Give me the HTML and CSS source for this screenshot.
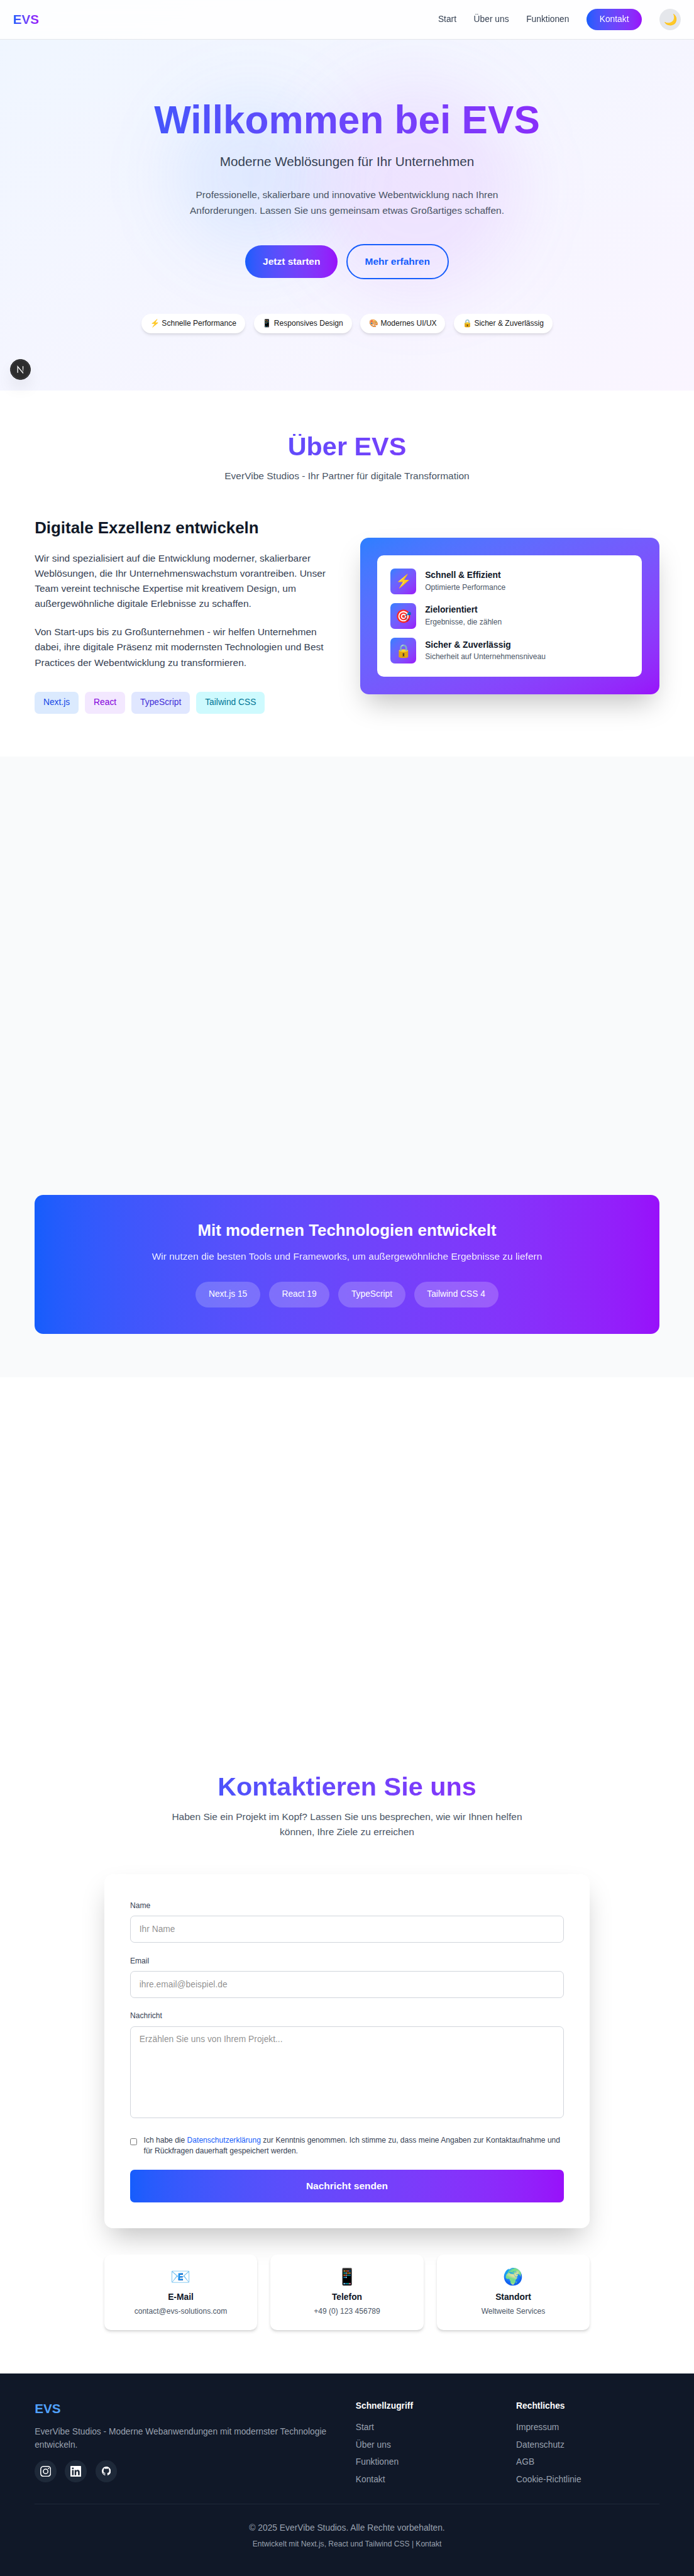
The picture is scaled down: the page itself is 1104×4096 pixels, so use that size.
FILE: index.html
```html
<!DOCTYPE html>
<html lang="de">
<head>
<meta charset="utf-8">
<title>EVS</title>
<link rel="stylesheet" href="styles.css">
</head>
<body>
<header class="header">
  <a class="logo gradient-text">EVS</a>
  <nav class="nav">
    <a>Start</a>
    <a>Über uns</a>
    <a>Funktionen</a>
    <a class="nav-cta">Kontakt</a>
    <button class="theme-toggle">🌙</button>
  </nav>
</header>
<main>
<section class="hero">
  <div class="blob blob-blue"></div>
  <div class="blob blob-purple"></div>
  <div class="hero-content">
    <h1 class="hero-title gradient-text">Willkommen bei EVS</h1>
    <p class="hero-subtitle">Moderne Weblösungen für Ihr Unternehmen</p>
    <p class="hero-text">Professionelle, skalierbare und innovative Webentwicklung nach Ihren Anforderungen. Lassen Sie uns gemeinsam etwas Großartiges schaffen.</p>
    <div class="hero-actions">
      <a class="btn btn-primary">Jetzt starten</a>
      <a class="btn btn-outline">Mehr erfahren</a>
    </div>
    <div class="badges">
      <span class="badge">⚡ Schnelle Performance</span>
      <span class="badge">📱 Responsives Design</span>
      <span class="badge">🎨 Modernes UI/UX</span>
      <span class="badge">🔒 Sicher &amp; Zuverlässig</span>
    </div>
  </div>
</section>

<section class="about">
  <h2 class="section-title gradient-text">Über EVS</h2>
  <p class="section-lead">EverVibe Studios - Ihr Partner für digitale Transformation</p>
  <div class="about-grid">
    <div>
      <h3 class="about-title">Digitale Exzellenz entwickeln</h3>
      <p class="about-text">Wir sind spezialisiert auf die Entwicklung moderner, skalierbarer Weblösungen, die Ihr Unternehmenswachstum vorantreiben. Unser Team vereint technische Expertise mit kreativem Design, um außergewöhnliche digitale Erlebnisse zu schaffen.</p>
      <p class="about-text">Von Start-ups bis zu Großunternehmen - wir helfen Unternehmen dabei, ihre digitale Präsenz mit modernsten Technologien und Best Practices der Webentwicklung zu transformieren.</p>
      <div class="tags">
        <span class="tag tag-blue">Next.js</span>
        <span class="tag tag-purple">React</span>
        <span class="tag tag-indigo">TypeScript</span>
        <span class="tag tag-cyan">Tailwind CSS</span>
      </div>
    </div>
    <div class="values">
      <ul class="values-list">
        <li class="value"><span class="value-icon">⚡</span><div><h4>Schnell &amp; Effizient</h4><p>Optimierte Performance</p></div></li>
        <li class="value"><span class="value-icon">🎯</span><div><h4>Zielorientiert</h4><p>Ergebnisse, die zählen</p></div></li>
        <li class="value"><span class="value-icon">🔒</span><div><h4>Sicher &amp; Zuverlässig</h4><p>Sicherheit auf Unternehmensniveau</p></div></li>
      </ul>
    </div>
  </div>
</section>

<section class="features">
  <div class="tech">
    <h3>Mit modernen Technologien entwickelt</h3>
    <p>Wir nutzen die besten Tools und Frameworks, um außergewöhnliche Ergebnisse zu liefern</p>
    <div class="tech-pills">
      <span>Next.js 15</span>
      <span>React 19</span>
      <span>TypeScript</span>
      <span>Tailwind CSS 4</span>
    </div>
  </div>
</section>

<section class="contact">
  <div class="contact-inner">
    <h2 class="section-title gradient-text">Kontaktieren Sie uns</h2>
    <p class="section-lead contact-lead">Haben Sie ein Projekt im Kopf? Lassen Sie uns besprechen, wie wir Ihnen helfen können, Ihre Ziele zu erreichen</p>
    <form class="form">
      <div class="field">
        <label for="name">Name</label>
        <input id="name" type="text" placeholder="Ihr Name">
      </div>
      <div class="field">
        <label for="email">Email</label>
        <input id="email" type="email" placeholder="ihre.email@beispiel.de">
      </div>
      <div class="field field-message">
        <label for="message">Nachricht</label>
        <textarea id="message" placeholder="Erzählen Sie uns von Ihrem Projekt..."></textarea>
      </div>
      <div class="consent">
        <input id="consent" type="checkbox">
        <label for="consent">Ich habe die <a>Datenschutzerklärung</a> zur Kenntnis genommen. Ich stimme zu, dass meine Angaben zur Kontaktaufnahme und für Rückfragen dauerhaft gespeichert werden.</label>
      </div>
      <button class="submit" type="button">Nachricht senden</button>
    </form>
    <div class="infos">
      <div class="info"><div class="info-icon">📧</div><h3>E-Mail</h3><p>contact@evs-solutions.com</p></div>
      <div class="info"><div class="info-icon">📱</div><h3>Telefon</h3><p>+49 (0) 123 456789</p></div>
      <div class="info"><div class="info-icon">🌍</div><h3>Standort</h3><p>Weltweite Services</p></div>
    </div>
  </div>
</section>
</main>

<footer class="footer">
  <div class="footer-grid">
    <div class="footer-brand">
      <h3>EVS</h3>
      <p>EverVibe Studios - Moderne Webanwendungen mit modernster Technologie entwickeln.</p>
      <div class="socials">
        <a><svg viewBox="0 0 24 24"><path d="M12 2.163c3.204 0 3.584.012 4.85.07 3.252.148 4.771 1.691 4.919 4.919.058 1.265.069 1.645.069 4.849 0 3.205-.012 3.584-.069 4.849-.149 3.225-1.664 4.771-4.919 4.919-1.266.058-1.644.07-4.85.07-3.204 0-3.584-.012-4.849-.07-3.26-.149-4.771-1.699-4.919-4.92-.058-1.265-.07-1.644-.07-4.849 0-3.204.013-3.583.07-4.849.149-3.227 1.664-4.771 4.919-4.919 1.266-.057 1.645-.069 4.849-.069zM12 0C8.741 0 8.333.014 7.053.072 2.695.272.273 2.69.073 7.052.014 8.333 0 8.741 0 12c0 3.259.014 3.668.072 4.948.2 4.358 2.618 6.78 6.98 6.98C8.333 23.986 8.741 24 12 24c3.259 0 3.668-.014 4.948-.072 4.354-.2 6.782-2.618 6.979-6.98.059-1.28.073-1.689.073-4.948 0-3.259-.014-3.667-.072-4.947-.196-4.354-2.617-6.78-6.979-6.98C15.668.014 15.259 0 12 0zm0 5.838a6.162 6.162 0 100 12.324 6.162 6.162 0 000-12.324zM12 16a4 4 0 110-8 4 4 0 010 8zm6.406-11.845a1.44 1.44 0 100 2.881 1.44 1.44 0 000-2.881z"/></svg></a>
        <a><svg viewBox="0 0 24 24"><path d="M20.447 20.452h-3.554v-5.569c0-1.328-.027-3.037-1.852-3.037-1.853 0-2.136 1.445-2.136 2.939v5.667H9.351V9h3.414v1.561h.046c.477-.9 1.637-1.85 3.37-1.85 3.601 0 4.267 2.37 4.267 5.455v6.286zM5.337 7.433a2.062 2.062 0 01-2.063-2.065 2.064 2.064 0 112.063 2.065zm1.782 13.019H3.555V9h3.564v11.452zM22.225 0H1.771C.792 0 0 .774 0 1.729v20.542C0 23.227.792 24 1.771 24h20.451C23.2 24 24 23.227 24 22.271V1.729C24 .774 23.2 0 22.222 0h.003z"/></svg></a>
        <a><svg viewBox="0 0 16 16" class="github"><path d="M8 0C3.58 0 0 3.58 0 8c0 3.54 2.29 6.53 5.47 7.59.4.07.55-.17.55-.38 0-.19-.01-.82-.01-1.49-2.01.37-2.53-.49-2.69-.94-.09-.23-.48-.94-.82-1.13-.28-.15-.68-.52-.01-.53.63-.01 1.08.58 1.23.82.72 1.21 1.87.87 2.33.66.07-.52.28-.87.51-1.07-1.78-.2-3.64-.89-3.64-3.95 0-.87.31-1.59.82-2.15-.08-.2-.36-1.02.08-2.12 0 0 .67-.21 2.2.82.64-.18 1.32-.27 2-.27s1.36.09 2 .27c1.53-1.04 2.2-.82 2.2-.82.44 1.1.16 1.92.08 2.12.51.56.82 1.27.82 2.15 0 3.07-1.87 3.75-3.65 3.95.29.25.54.73.54 1.48 0 1.07-.01 1.93-.01 2.2 0 .21.15.46.55.38A8.01 8.01 0 0016 8c0-4.42-3.58-8-8-8z"/></svg></a>
      </div>
    </div>
    <div class="footer-col">
      <h4>Schnellzugriff</h4>
      <ul><li>Start</li><li>Über uns</li><li>Funktionen</li><li>Kontakt</li></ul>
    </div>
    <div class="footer-col">
      <h4>Rechtliches</h4>
      <ul><li>Impressum</li><li>Datenschutz</li><li>AGB</li><li>Cookie-Richtlinie</li></ul>
    </div>
  </div>
  <div class="footer-bottom">
    <p>© 2025 EverVibe Studios. Alle Rechte vorbehalten.</p>
    <p class="small">Entwickelt mit Next.js, React und Tailwind CSS | Kontakt</p>
  </div>
</footer>

<div class="dev-badge">
  <svg viewBox="0 0 40 40" fill="none">
    <defs>
      <linearGradient id="stem" x1="0" y1="13" x2="0" y2="27" gradientUnits="userSpaceOnUse"><stop offset=".3" stop-color="#fff"/><stop offset="1" stop-color="#fff" stop-opacity=".1"/></linearGradient>
    </defs>
    <path d="M14.5 27V14L26 28" stroke="#fff" stroke-width="1.7"/>
    <path d="M25.4 13.3v11.5" stroke="url(#stem)" stroke-width="1.7"/>
  </svg>
</div>
</body>
</html>
```
FILE: styles.css
```css
html { font-size: 13.8px; }
*, *::before, *::after { box-sizing: border-box; margin: 0; padding: 0; }
body {
  position: relative;
  font-family: "Liberation Sans", Arial, sans-serif;
  line-height: 1.5;
  color: #171717;
  background: #fff;
}
ul { list-style: none; }
button, input, textarea { font: inherit; color: inherit; border: 0; background: none; }

.gradient-text {
  background: linear-gradient(to right in oklab, #155dfc, #9810fa);
  -webkit-background-clip: text;
  background-clip: text;
  color: transparent;
}

/* Header */
.header {
  position: absolute;
  top: 0; left: 0; right: 0;
  z-index: 10;
  display: flex;
  justify-content: space-between;
  align-items: center;
  padding: 1rem 1.5rem;
  background: rgba(255, 255, 255, .87);
  backdrop-filter: blur(12px);
  border-bottom: 1px solid #e5e7eb;
}
.logo { font-size: 1.5rem; line-height: 2rem; font-weight: 700; }
.nav { display: flex; align-items: center; gap: 2rem; color: #364153; }
.nav-cta {
  padding: .5rem 1.5rem;
  border-radius: 99px;
  color: #fff;
  background: linear-gradient(to right in oklab, #155dfc, #9810fa);
}
.theme-toggle {
  display: flex;
  align-items: center;
  justify-content: center;
  width: 2.5rem;
  height: 2.5rem;
  border-radius: 50%;
  background: #e5e7eb;
  font-size: 1.25rem;
  line-height: 1.75rem;
}

/* Hero */
.hero {
  position: relative;
  height: 620.7px;
  padding-top: 11.625rem;
  overflow: hidden;
  text-align: center;
  background: linear-gradient(to bottom right in oklab, #eff6ff, #faf5ff);
}
.blob { position: absolute; border-radius: 50%; filter: blur(4rem); }
.blob-blue {
  top: 25%; left: 25%;
  width: 18rem; height: 18rem;
  background: rgba(43, 127, 255, .1);
}
.blob-purple {
  right: 25%; bottom: 25%;
  width: 24rem; height: 24rem;
  background: rgba(173, 70, 255, .1);
}
.hero-content { position: relative; padding: 0 4rem; }
.hero-title { font-size: 4.5rem; line-height: 1; font-weight: 700; margin-bottom: 1.5rem; }
.hero-subtitle { font-size: 1.5rem; line-height: 2rem; color: #364153; margin-bottom: 2rem; }
.hero-text {
  width: 42rem;
  margin: 0 auto 3rem;
  padding: 0 2rem;
  font-size: 1.125rem;
  line-height: 1.75rem;
  color: #4a5565;
}
.hero-actions { display: flex; justify-content: center; align-items: center; gap: 1rem; margin-bottom: 4rem; }
.btn { padding: 1rem 2rem; border-radius: 99px; font-size: 1.125rem; line-height: 1.75rem; font-weight: 600; }
.btn-primary { color: #fff; background: linear-gradient(to right in oklab, #155dfc, #9810fa); }
.btn-outline { color: #155dfc; border: 2px solid #155dfc; }
.badges { display: flex; justify-content: center; gap: 1rem; }
.badge {
  padding: .5rem 1rem;
  border-radius: 99px;
  background: #fff;
  font-size: .875rem;
  line-height: 1.25rem;
  box-shadow: 0 .25rem .375rem -.0625rem rgba(0, 0, 0, .1), 0 .125rem .25rem -.125rem rgba(0, 0, 0, .1);
}

/* About */
.about { height: 582.8px; padding: 5rem 4rem; }
.section-title { font-size: 3rem; line-height: 1; font-weight: 700; text-align: center; margin-bottom: 1rem; }
.section-lead {
  margin-bottom: 4rem;
  font-size: 1.125rem;
  line-height: 1.75rem;
  text-align: center;
  color: #4a5565;
}
.about-grid { display: grid; grid-template-columns: 1fr 1fr; gap: 3rem; align-items: center; }
.about-title { font-size: 1.875rem; line-height: 2.25rem; font-weight: 700; color: #101828; margin-bottom: 1.5rem; }
.about-text { font-size: 1.125rem; line-height: 1.75rem; color: #364153; margin-bottom: 1.5rem; }
.tags { display: flex; gap: .75rem; padding-top: 1rem; }
.tag { padding: .5rem 1rem; border-radius: .5rem; }
.tag-blue { background: #dbeafe; color: #1447e6; }
.tag-purple { background: #f3e8ff; color: #8200db; }
.tag-indigo { background: #e0e7ff; color: #432dd7; }
.tag-cyan { background: #cefafe; color: #007595; }
.values {
  padding: 2rem;
  border-radius: 1rem;
  background: linear-gradient(to bottom right in oklab, #2b7fff, #9810fa);
  box-shadow: 0 1.5625rem 3.125rem -.75rem rgba(0, 0, 0, .25);
}
.values-list { display: grid; gap: 1rem; padding: 1.5rem; border-radius: .75rem; background: #fff; }
.value { display: flex; align-items: center; gap: 1rem; }
.value-icon {
  display: flex;
  align-items: center;
  justify-content: center;
  width: 3rem;
  height: 3rem;
  border-radius: .5rem;
  background: linear-gradient(to bottom right in oklab, #2b7fff, #9810fa);
  font-size: 1.5rem;
  line-height: 2rem;
}
.value h4 { font-size: 1rem; font-weight: 600; color: #101828; }
.value p { font-size: .875rem; line-height: 1.25rem; color: #4a5565; }

/* Features */
.features {
  display: flex;
  flex-direction: column;
  justify-content: flex-end;
  height: 986.3px;
  padding: 5rem 4rem;
  background: #f9fafb;
}
.tech {
  padding: 3rem;
  border-radius: 1rem;
  text-align: center;
  color: #fff;
  background: linear-gradient(to right in oklab, #155dfc, #9810fa);
}
.tech h3 { font-size: 1.875rem; line-height: 2.25rem; margin-bottom: 1rem; }
.tech p { font-size: 1.125rem; line-height: 1.75rem; margin-bottom: 2rem; opacity: .9; }
.tech-pills { display: flex; justify-content: center; gap: 1rem; }
.tech-pills span { padding: .75rem 1.5rem; border-radius: 99px; background: rgba(255, 255, 255, .2); }

/* Contact */
.contact {
  display: flex;
  flex-direction: column;
  justify-content: flex-end;
  height: 1584.6px;
  padding-bottom: 5rem;
}
.contact-inner { width: 56rem; margin: 0 auto; }
.contact-lead { width: 42rem; margin-left: auto; margin-right: auto; }
.form {
  padding: 3rem;
  border-radius: 1rem;
  background: #fff;
  box-shadow: 0 1.5625rem 3.125rem -.75rem rgba(0, 0, 0, .25);
}
.field { margin-bottom: 1.5rem; }
.field label { display: block; margin-bottom: .5rem; font-size: .875rem; line-height: 1.25rem; color: #364153; }
.field input, .field textarea {
  display: block;
  width: 100%;
  height: 3.125rem;
  padding: .75rem 1rem;
  border: 1px solid #d1d5dc;
  border-radius: .5rem;
  line-height: 1.5rem;
  resize: none;
}
.field textarea { height: 10.625rem; }
.field ::placeholder { color: rgba(23, 23, 23, .5); }
.field-message { margin-bottom: 1.9375rem; }
.consent { display: flex; align-items: flex-start; gap: .75rem; margin-bottom: 1.5rem; }
.consent input { flex: none; width: .8125rem; height: .8125rem; margin-top: .35rem; }
.consent label { font-size: .875rem; line-height: 1.25rem; color: #364153; }
.consent a { color: #155dfc; }
.submit {
  display: block;
  width: 100%;
  padding: 1rem;
  border-radius: .5rem;
  font-size: 1.125rem;
  line-height: 1.75rem;
  font-weight: 600;
  color: #fff;
  background: linear-gradient(to right in oklab, #155dfc, #9810fa);
}
.infos { display: grid; grid-template-columns: repeat(3, 1fr); gap: 1.5rem; margin-top: 3rem; text-align: center; }
.info {
  padding: 1.5rem;
  border-radius: .75rem;
  background: #fff;
  box-shadow: 0 .25rem .375rem -.0625rem rgba(0, 0, 0, .1), 0 .125rem .25rem -.125rem rgba(0, 0, 0, .1);
}
.info-icon { font-size: 1.875rem; line-height: 2.25rem; margin-bottom: .5rem; }
.info h3 { font-size: 1rem; font-weight: 600; color: #101828; margin-bottom: .25rem; }
.info p { font-size: .875rem; line-height: 1.25rem; color: #4a5565; }

/* Footer */
.footer { height: 321.6px; padding: 3rem 4rem 0; background: #101828; color: #99a1af; overflow: hidden; }
.footer-grid { display: grid; grid-template-columns: repeat(4, 1fr); gap: 2rem; margin-bottom: 2rem; }
.footer-brand { grid-column: span 2; }
.footer-brand h3 { font-size: 1.5rem; line-height: 2rem; color: #51a2ff; margin-bottom: 1rem; }
.footer-brand p { margin-bottom: 1rem; }
.socials { display: flex; gap: 1rem; }
.socials a {
  display: flex;
  align-items: center;
  justify-content: center;
  width: 2.5rem;
  height: 2.5rem;
  border-radius: 50%;
  background: #1e2939;
}
.socials svg { width: 1.25rem; height: 1.25rem; fill: #fff; }
.socials .github { width: 1.04rem; height: 1.04rem; }
.footer-col h4 { font-size: 1rem; color: #fff; margin-bottom: 1rem; }
.footer-col li { margin-bottom: .5rem; }
.footer-col li:last-child { margin-bottom: 0; }
.footer-bottom { padding-top: 2rem; border-top: 1px solid #1e2939; text-align: center; }
.footer-bottom .small { margin-top: .5rem; font-size: .875rem; line-height: 1.25rem; }

/* Floating development badge */
.dev-badge {
  position: absolute;
  z-index: 20;
  top: 41.4rem;
  left: 1.1875rem;
  width: 2.375rem;
  height: 2.375rem;
  border-radius: 50%;
  background: #2d2d2e;
  border: 1px solid #1a1a1b;
  box-shadow: inset 0 0 0 1px #4b4b4c, 0 1rem 2rem -.5rem rgba(0, 0, 0, .2);
}
.dev-badge svg { display: block; width: 100%; height: 100%; }
```
